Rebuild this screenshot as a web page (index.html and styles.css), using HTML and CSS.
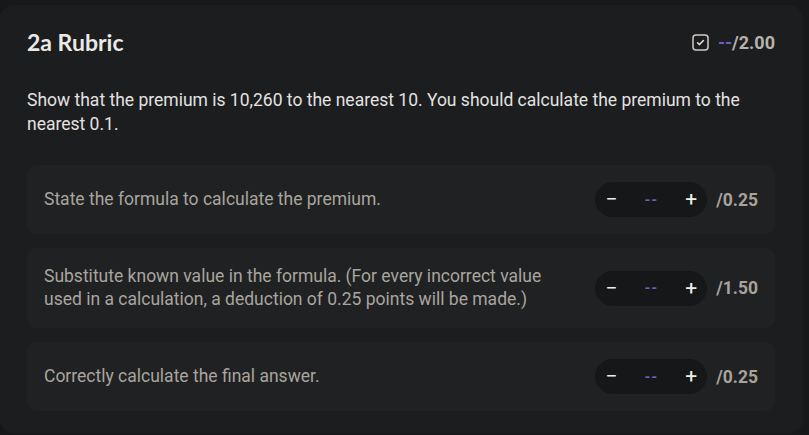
FILE: index.html
```html
<!DOCTYPE html>
<html>
<head>
<meta charset="utf-8">
<link rel="stylesheet" href="styles.css">
</head>
<body>
<div class="page">
  <section class="card">
    <header class="card-header">
      <h2 class="title">2a Rubric</h2>
      <div class="total">
        <svg class="check-icon" width="17" height="17" viewBox="0 0 17 17" aria-hidden="true">
          <rect x="1" y="1" width="15" height="15" rx="3" fill="none" stroke="#cfcac3" stroke-width="1.5"/>
          <path d="M5.6 8.8 L7.5 10.6 L11.4 6.6" fill="none" stroke="#e6e2dc" stroke-width="1.5" stroke-linecap="round" stroke-linejoin="round"/>
        </svg>
        <span class="score"><span class="dash">--</span>/2.00</span>
      </div>
    </header>
    <p class="question">Show that the premium is 10,260 to the nearest 10. You should calculate the premium to the nearest 0.1.</p>
    <div class="rows">
      <div class="row">
        <div class="row-text">State the formula to calculate the premium.</div>
        <div class="row-controls">
          <div class="stepper"><span class="btn">&minus;</span><span class="val">--</span><span class="btn">+</span></div>
          <span class="max">/0.25</span>
        </div>
      </div>
      <div class="row">
        <div class="row-text">Substitute known value in the formula. (For every incorrect value used in a calculation, a deduction of 0.25 points will be made.)</div>
        <div class="row-controls">
          <div class="stepper"><span class="btn">&minus;</span><span class="val">--</span><span class="btn">+</span></div>
          <span class="max">/1.50</span>
        </div>
      </div>
      <div class="row">
        <div class="row-text">Correctly calculate the final answer.</div>
        <div class="row-controls">
          <div class="stepper"><span class="btn">&minus;</span><span class="val">--</span><span class="btn">+</span></div>
          <span class="max">/0.25</span>
        </div>
      </div>
    </div>
  </section>
</div>
</body>
</html>
```

FILE: styles.css
```css
html, body {
  margin: 0;
  padding: 0;
  background: #17181a;
}
body {
  font-family: Roboto, "Liberation Sans", sans-serif;
  width: 809px;
  height: 435px;
  overflow: hidden;
}
.page {
  padding-top: 5px;
  width: 803px;
}
.card {
  box-sizing: border-box;
  background: #1c1d1f;
  border-radius: 14px;
  padding: 24px 28px 20px 27px;
  height: 428px;
}
.card-header {
  display: flex;
  align-items: center;
  justify-content: space-between;
  height: 26px;
}
.title {
  margin: 0;
  font-family: Lato, "Noto Sans", sans-serif;
  font-weight: 700;
  font-size: 23px;
  line-height: 26px;
  color: #ebe9e6;
}
.total {
  display: flex;
  align-items: center;
  gap: 9px;
}
.check-icon {
  display: block;
}
.score {
  font-size: 18px;
  font-weight: 700;
  color: #b7b2aa;
}
.dash {
  color: #6c5fbd;
}
.question {
  margin: 33px 0 0 0;
  font-size: 17.5px;
  line-height: 24px;
  color: #e3e2e0;
}
.rows {
  margin-top: 29px;
  display: flex;
  flex-direction: column;
  gap: 14px;
}
.row {
  background: #202123;
  border-radius: 9px;
  display: flex;
  align-items: center;
  justify-content: space-between;
  gap: 20px;
  padding: 17px;
  min-height: 35px;
}
.row-text {
  font-size: 17.5px;
  line-height: 23px;
  color: #a9a59e;
  max-width: 530px;
}
.row-controls {
  display: flex;
  align-items: center;
  gap: 9px;
  flex-shrink: 0;
}
.stepper {
  display: flex;
  align-items: center;
  width: 112px;
  height: 35px;
  border-radius: 18px;
  background: #161718;
}
.btn {
  width: 32px;
  text-align: center;
  font-size: 21px;
  line-height: 35px;
  color: #f0efed;
}
.val {
  flex: 1;
  text-align: center;
  font-size: 15px;
  font-weight: 700;
  color: #6c5fbd;
  letter-spacing: 1px;
}
.max {
  font-size: 17.5px;
  font-weight: 700;
  color: #a8a39b;
}
```
